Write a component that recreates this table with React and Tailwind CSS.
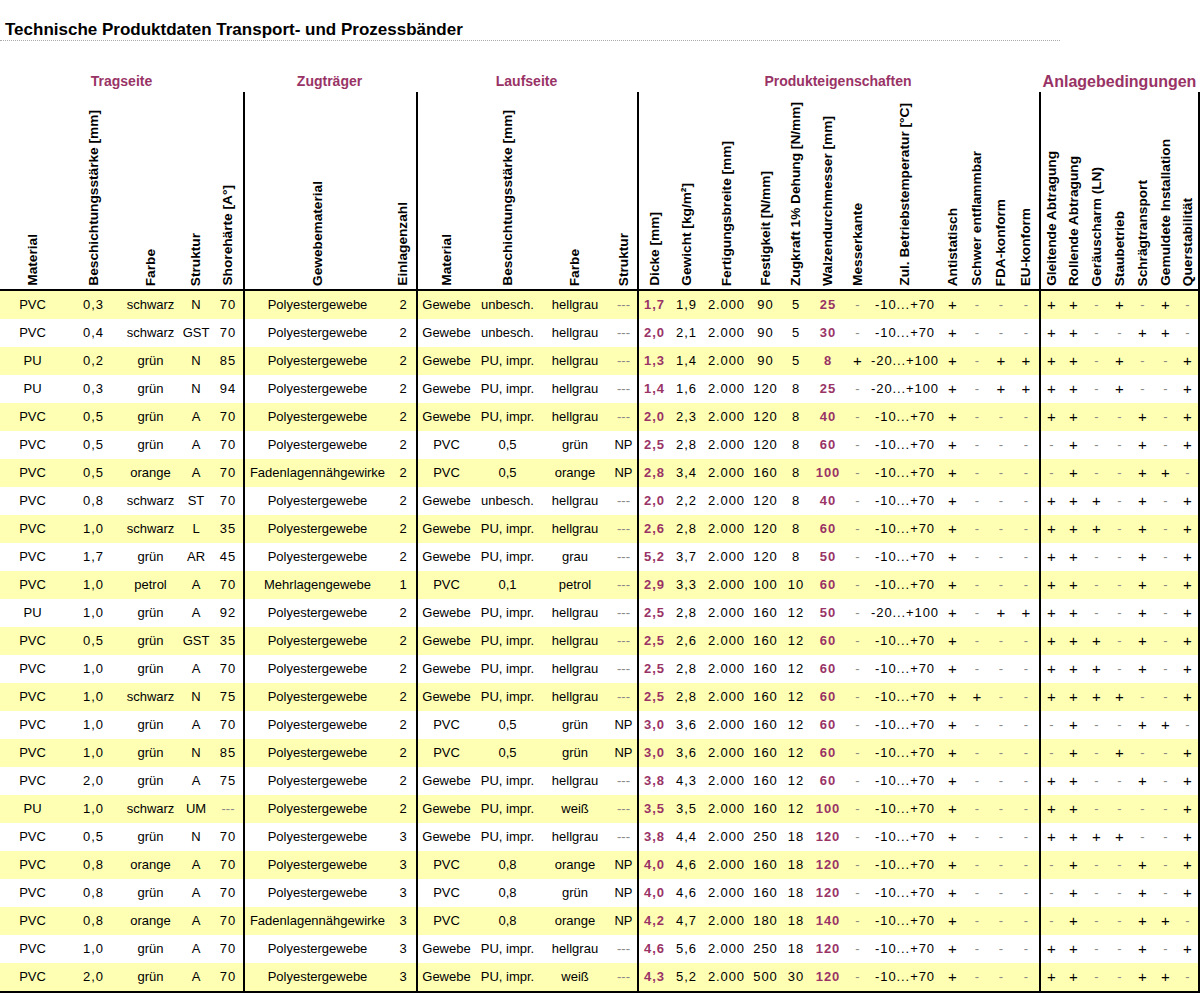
const PURPLE = 'text-[#993366]'

// column definitions: width class, header label, optional group start border, cell styling
const cols = [
  { w: 'w-[65px]', label: 'Material' },
  { w: 'w-[57px]', label: 'Beschichtungsstärke [mm]', num: true },
  { w: 'w-[57px]', label: 'Farbe' },
  { w: 'w-[34px]', label: 'Struktur' },
  { w: 'w-[30px]', label: 'Shorehärte [A°]', num: true },

  { w: 'w-[147px]', label: 'Gewebematerial', start: true },
  { w: 'w-[26px]', label: 'Einlagenzahl' },

  { w: 'w-[59px]', label: 'Material', start: true },
  { w: 'w-[65px]', label: 'Beschichtungsstärke [mm]' },
  { w: 'w-[70px]', label: 'Farbe' },
  { w: 'w-[27px]', label: 'Struktur' },

  { w: 'w-[33px]', label: 'Dicke [mm]', start: true, num: true, hi: true },
  { w: 'w-[33px]', label: 'Gewicht [kg/m²]', num: true },
  { w: 'w-[47px]', label: 'Fertigungsbreite [mm]', num: true },
  { w: 'w-[31px]', label: 'Festigkeit [N/mm]', num: true },
  { w: 'w-[30px]', label: 'Zugkraft 1% Dehung [N/mm]', num: true },
  { w: 'w-[34px]', label: 'Walzendurchmesser [mm]', num: true, hi: true },
  { w: 'w-[25px]', label: 'Messerkante', flag: true },
  { w: 'w-[70px]', label: 'Zul. Betriebstemperatur [°C]', num: true },
  { w: 'w-[25px]', label: 'Antistatisch', flag: true },
  { w: 'w-[24px]', label: 'Schwer entflammbar', flag: true },
  { w: 'w-[24px]', label: 'FDA-konform', flag: true },
  { w: 'w-[26px]', label: 'EU-konform', flag: true },

  { w: 'w-[23px]', label: 'Gleitende Abtragung', start: true, flag: true },
  { w: 'w-[23px]', label: 'Rollende Abtragung', flag: true },
  { w: 'w-[23px]', label: 'Geräuscharm (LN)', flag: true },
  { w: 'w-[23px]', label: 'Staubetrieb', flag: true },
  { w: 'w-[23px]', label: 'Schrägtransport', flag: true },
  { w: 'w-[23px]', label: 'Gemuldete Installation', flag: true },
  { w: 'w-[23px]', label: 'Querstabilität', end: true, flag: true },
]

const groups = [
  { w: 'w-[243px]', label: 'Tragseite', size: 'text-[14px]' },
  { w: 'w-[173px]', label: 'Zugträger', size: 'text-[14px]' },
  { w: 'w-[221px]', label: 'Laufseite', size: 'text-[14px]' },
  { w: 'w-[402px]', label: 'Produkteigenschaften', size: 'text-[14px]' },
  { w: 'w-[161px]', label: 'Anlagebedingungen', size: 'text-[16px]' },
]

const T70 = '-10...+70'
const T100 = '-20...+100'
const GL = ['Gewebe', 'unbesch.', 'hellgrau', '---']
const GP = ['Gewebe', 'PU, impr.', 'hellgrau', '---']
const std = ['-', T70, '+', '-', '-', '-']

const rows = [
  ['PVC', '0,3', 'schwarz', 'N', '70', 'Polyestergewebe', '2', ...GL, '1,7', '1,9', '2.000', '90', '5', '25', ...std, '+ + - + - + -'],
  ['PVC', '0,4', 'schwarz', 'GST', '70', 'Polyestergewebe', '2', ...GL, '2,0', '2,1', '2.000', '90', '5', '30', ...std, '+ + - - + + -'],
  ['PU', '0,2', 'grün', 'N', '85', 'Polyestergewebe', '2', ...GP, '1,3', '1,4', '2.000', '90', '5', '8', '+', T100, '+', '-', '+', '+', '+ + - + - - +'],
  ['PU', '0,3', 'grün', 'N', '94', 'Polyestergewebe', '2', ...GP, '1,4', '1,6', '2.000', '120', '8', '25', '-', T100, '+', '-', '+', '+', '+ + - + - - +'],
  ['PVC', '0,5', 'grün', 'A', '70', 'Polyestergewebe', '2', ...GP, '2,0', '2,3', '2.000', '120', '8', '40', ...std, '+ + - - + - +'],
  ['PVC', '0,5', 'grün', 'A', '70', 'Polyestergewebe', '2', 'PVC', '0,5', 'grün', 'NP', '2,5', '2,8', '2.000', '120', '8', '60', ...std, '- + - - + - +'],
  ['PVC', '0,5', 'orange', 'A', '70', 'Fadenlagennähgewirke', '2', 'PVC', '0,5', 'orange', 'NP', '2,8', '3,4', '2.000', '160', '8', '100', ...std, '- + - - + + -'],
  ['PVC', '0,8', 'schwarz', 'ST', '70', 'Polyestergewebe', '2', ...GL, '2,0', '2,2', '2.000', '120', '8', '40', ...std, '+ + + - + - +'],
  ['PVC', '1,0', 'schwarz', 'L', '35', 'Polyestergewebe', '2', ...GP, '2,6', '2,8', '2.000', '120', '8', '60', ...std, '+ + + - + - +'],
  ['PVC', '1,7', 'grün', 'AR', '45', 'Polyestergewebe', '2', 'Gewebe', 'PU, impr.', 'grau', '---', '5,2', '3,7', '2.000', '120', '8', '50', ...std, '+ + - - + - +'],
  ['PVC', '1,0', 'petrol', 'A', '70', 'Mehrlagengewebe', '1', 'PVC', '0,1', 'petrol', '---', '2,9', '3,3', '2.000', '100', '10', '60', ...std, '+ + - - + - +'],
  ['PU', '1,0', 'grün', 'A', '92', 'Polyestergewebe', '2', ...GP, '2,5', '2,8', '2.000', '160', '12', '50', '-', T100, '+', '-', '+', '+', '+ + - - + - +'],
  ['PVC', '0,5', 'grün', 'GST', '35', 'Polyestergewebe', '2', ...GP, '2,5', '2,6', '2.000', '160', '12', '60', ...std, '+ + + - + - +'],
  ['PVC', '1,0', 'grün', 'A', '70', 'Polyestergewebe', '2', ...GP, '2,5', '2,8', '2.000', '160', '12', '60', ...std, '+ + + - + - +'],
  ['PVC', '1,0', 'schwarz', 'N', '75', 'Polyestergewebe', '2', ...GP, '2,5', '2,8', '2.000', '160', '12', '60', '-', T70, '+', '+', '-', '-', '+ + + + - - +'],
  ['PVC', '1,0', 'grün', 'A', '70', 'Polyestergewebe', '2', 'PVC', '0,5', 'grün', 'NP', '3,0', '3,6', '2.000', '160', '12', '60', ...std, '- + - - + + -'],
  ['PVC', '1,0', 'grün', 'N', '85', 'Polyestergewebe', '2', 'PVC', '0,5', 'grün', 'NP', '3,0', '3,6', '2.000', '160', '12', '60', ...std, '- + - + - - +'],
  ['PVC', '2,0', 'grün', 'A', '75', 'Polyestergewebe', '2', ...GP, '3,8', '4,3', '2.000', '160', '12', '60', ...std, '+ + - - + - +'],
  ['PU', '1,0', 'schwarz', 'UM', '---', 'Polyestergewebe', '2', 'Gewebe', 'PU, impr.', 'weiß', '---', '3,5', '3,5', '2.000', '160', '12', '100', ...std, '+ + - - - - +'],
  ['PVC', '0,5', 'grün', 'N', '70', 'Polyestergewebe', '3', ...GP, '3,8', '4,4', '2.000', '250', '18', '120', ...std, '+ + + + - - +'],
  ['PVC', '0,8', 'orange', 'A', '70', 'Polyestergewebe', '3', 'PVC', '0,8', 'orange', 'NP', '4,0', '4,6', '2.000', '160', '18', '120', ...std, '- + - - + - +'],
  ['PVC', '0,8', 'grün', 'A', '70', 'Polyestergewebe', '3', 'PVC', '0,8', 'grün', 'NP', '4,0', '4,6', '2.000', '160', '18', '120', ...std, '- + - - + - +'],
  ['PVC', '0,8', 'orange', 'A', '70', 'Fadenlagennähgewirke', '3', 'PVC', '0,8', 'orange', 'NP', '4,2', '4,7', '2.000', '180', '18', '140', ...std, '- + - - + + -'],
  ['PVC', '1,0', 'grün', 'A', '70', 'Polyestergewebe', '3', ...GP, '4,6', '5,6', '2.000', '250', '18', '120', ...std, '+ + - - + - +'],
  ['PVC', '2,0', 'grün', 'A', '70', 'Polyestergewebe', '3', 'Gewebe', 'PU, impr.', 'weiß', '---', '4,3', '5,2', '2.000', '500', '30', '120', ...std, '+ + - - + + -'],
].map((r) => [...r.slice(0, -1), ...r[r.length - 1].split(' ')])

function cellClass(c) {
  return [
    c.w,
    'shrink-0',
    c.start ? 'border-l-2 border-black' : '',
    c.end ? 'border-r-2 border-black' : '',
  ].join(' ')
}

function HeaderCell({ c }) {
  return (
    <div className={`${cellClass(c)} h-[197px] flex items-end justify-center pb-[3px] overflow-hidden`}>
      <span className="[writing-mode:vertical-rl] rotate-180 whitespace-nowrap text-[13.7px] font-bold leading-none text-black">
        {c.label}
      </span>
    </div>
  )
}

function DataCell({ c, v }) {
  const faint = v === '-' || v === '---'
  let tone = 'text-black'
  if (c.hi) tone = `${PURPLE} font-bold`
  else if (faint) tone = 'text-[#888]'
  const size = c.flag && v === '+' ? 'text-[15px]' : ''
  return (
    <div className={`${cellClass(c)} h-[28px] flex items-center justify-center whitespace-nowrap ${c.num && !faint ? 'tracking-[0.9px]' : ''} ${tone} ${size}`}>
      {v}
    </div>
  )
}

export default function App() {
  return (
    <div className="w-[1200px] h-[995px] overflow-hidden bg-white font-['Liberation_Sans',Arial,sans-serif] text-black">
      <div className="pt-[20px]">
        <div className="w-[1060px] h-[21px] border-b border-dotted border-[#aaa] pl-[5px] text-[17px] leading-[20px] font-bold">
          Technische Produktdaten Transport- und Prozessbänder
        </div>
      </div>

      <div className="mt-[30px] flex h-[21px]">
        {groups.map((g) => (
          <div key={g.label} className={`${g.w} shrink-0 text-center font-bold leading-[21px] ${g.size} ${PURPLE}`}>
            {g.label}
          </div>
        ))}
      </div>

      <div className="flex border-b-2 border-black">
        {cols.map((c, i) => (
          <HeaderCell key={i} c={c} />
        ))}
      </div>

      <div className="border-b-2 border-black text-[13px]">
        {rows.map((r, ri) => (
          <div key={ri} className={`flex ${ri % 2 === 0 ? 'bg-[#ffffb4]' : 'bg-white'}`}>
            {cols.map((c, ci) => (
              <DataCell key={ci} c={c} v={r[ci]} />
            ))}
          </div>
        ))}
      </div>
    </div>
  )
}
